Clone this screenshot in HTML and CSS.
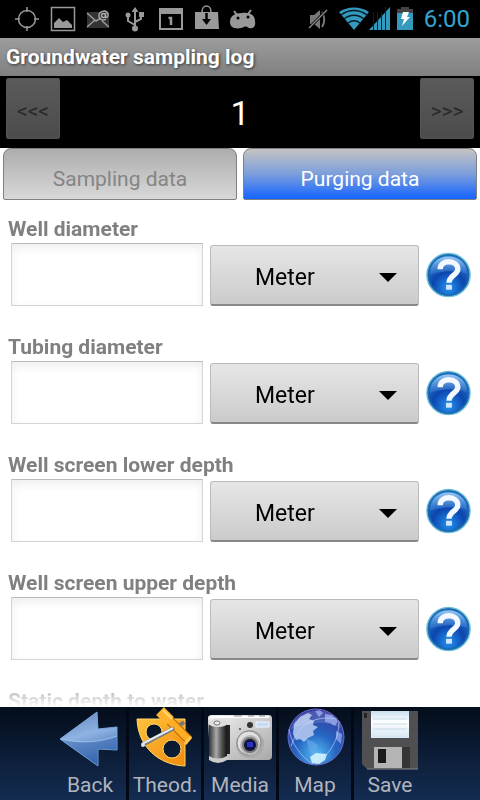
FILE: index.html
```html
<!DOCTYPE html>
<html lang="en">
<head>
  <meta charset="UTF-8" />
  <meta name="viewport" content="width=device-width, initial-scale=1.0" />
  <title>Groundwater sampling log</title>
  <link rel="stylesheet" href="styles.css">
</head>
<body>
<svg class="defs" aria-hidden="true">
  <defs>
    <radialGradient id="helpFill" cx="50%" cy="80%" r="75%">
      <stop offset="0" stop-color="#2392ee" />
      <stop offset="0.5" stop-color="#0c45ae" />
      <stop offset="1" stop-color="#2f80d0" />
    </radialGradient>
    <linearGradient id="helpShine" x2="0" y2="1">
      <stop offset="0" stop-color="#b4dcff" stop-opacity="0.8" />
      <stop offset="1" stop-color="#4b93e4" stop-opacity="0.25" />
    </linearGradient>
    <symbol id="help" viewBox="0 0 46 46">
      <circle cx="23" cy="23" r="22" fill="url(#helpFill)" stroke="#6bbadb" stroke-width="1.500" />
      <circle cx="23" cy="23" r="20.500" fill="none" stroke="#1a6aac" stroke-width="1.500" />
      <path d="M4 23C4 11 12 4 23 4s19 7 19 18c-10-4-25-4-38 1z" fill="url(#helpShine)" />
      <path d="M14.500 17c0-5 4-7.500 9-7.500s9 3 9 7.500c0 6-9 6.500-9 14" fill="none" stroke="#f4f8ff" stroke-width="5.500" />
      <path d="M20.500 33h6v5h-6z" fill="#d4e6ff" />
    </symbol>
  </defs>
</svg>

<div class="status-bar">
  <div class="notifications">
    <svg viewBox="0 0 36 38"><g fill="none" stroke="#999" stroke-width="1.500"><circle cx="18" cy="19" r="8.500" /><path d="M18 7v5M18 26v5M6 19h5M25 19h5" /></g></svg>
    <svg viewBox="0 0 36 38"><path d="M6.500 7.500h23v23h-23z" fill="none" stroke="#999" stroke-width="1.500" /><path d="M9 28v-5l5-5 4 4 4-2 5 5v3z" fill="#999" /></svg>
    <svg viewBox="0 0 36 38"><path d="M6 12h22v16H6z" fill="#333" /><path d="M6 13l9 8 5-3M6 27l8-7M28 27l-7-6" fill="none" stroke="#999" stroke-width="1.500" /><g fill="none" stroke="#aaa" stroke-width="1.400"><circle cx="22.500" cy="15.500" r="2" /><path d="M24.500 13v4c2 1 3-1 2.500-3-2-5-10-3-9 3 1 3 4 4 7 2" /></g></svg>
    <svg viewBox="0 0 36 38"><path d="M18 28V10M18 25l-7-4v-5M18 22l6-3v-4" fill="none" stroke="#999" stroke-width="2" /><path d="M14.500 12L18 7l3.500 5zM22 12h5v5h-5z" fill="#999" /><circle cx="11" cy="15" r="2.500" fill="#999" /><circle cx="18" cy="28.500" r="3" fill="#999" /></svg>
    <svg viewBox="0 0 36 38"><path d="M7 9h22v20H7z" fill="none" stroke="#999" stroke-width="2" /><path d="M6 8h24v6H6z" fill="#999" /><path d="M15.500 18h2.500v7" fill="none" stroke="#999" stroke-width="2.500" /></svg>
    <svg viewBox="0 0 36 38"><path d="M6 12h23l1 17H6z" fill="#999" /><path d="M13 12c0-8 9-8 9 0" fill="none" stroke="#999" stroke-width="1.500" /><path d="M17.500 13v8" stroke="#000" stroke-width="2.500" /><path d="M13 19h9l-4.500 6z" /></svg>
    <svg viewBox="0 0 36 38"><path d="M9 11l3 4M26 10l-3 4" stroke="#999" stroke-width="2" /><path d="M5 22c0-6 5-9 12-9 8-1 13 2 13 8 1 6-2 8-6 7-2-1-3-2-5-1-4 2-14 3-14-5z" fill="#999" /><circle cx="13" cy="18" r="1.500" /><circle cx="23" cy="17" r="1.500" /></svg>
  </div>
  <div class="system">
    <svg class="mute" viewBox="0 0 20 38"><path d="M2 15h4l6-5v19l-6-5H2z" fill="#777" /><path d="M14 12c3 4 3 11 0 15" fill="none" stroke="#777" stroke-width="2" /><path d="M1 28L19 10" stroke="#000" stroke-width="3" /><path d="M1 28L19 10" stroke="#888" stroke-width="1.500" /></svg>
    <svg class="wifi" viewBox="0 0 30 38"><path d="M15 30L0 12C8 6 22 6 30 12z" fill="#3399bd" /><path d="M2 15c8-6 18-6 26 0M5 19c6-5 14-5 20 0M9 23c4-3 8-3 12 0" fill="none" stroke="#051c25" stroke-width="1.500" /></svg>
    <svg class="signal" viewBox="0 0 22 38"><path d="M0 30L21 7v23z" fill="#3399bd" /><path d="M4.500 30V12M8.500 30V12M12.500 30V12M16.500 30V7" stroke="#06202b" /></svg>
    <svg class="battery" viewBox="0 0 16 38"><path d="M4 7h8v3H4zM0 9h16v5H0z" fill="#444" /><path d="M0 13h16v17H0z" fill="#3399bd" /><path d="M6 12h6l-2 5h3l-8 9 2-7H4z" fill="#fff" /></svg>
    <span class="clock">6:00</span>
  </div>
</div>

<header>
  <h1>Groundwater sampling log</h1>
</header>

<div class="pager">
  <button type="button" disabled>&lt;&lt;&lt;</button>
  <span class="page">1</span>
  <button type="button" disabled>&gt;&gt;&gt;</button>
</div>

<nav class="tabs">
  <button type="button">Sampling data</button>
  <button type="button" class="active">Purging data</button>
</nav>

<main>
  <div class="field">
    <label for="wellDiameter">Well diameter</label>
    <div class="row">
      <input type="text" id="wellDiameter">
      <div class="unit"><select aria-label="Well diameter unit"><option>Meter</option></select></div>
      <button type="button" class="help" aria-label="Help"><svg><use href="#help" /></svg></button>
    </div>
  </div>
  <div class="field">
    <label for="tubingDiameter">Tubing diameter</label>
    <div class="row">
      <input type="text" id="tubingDiameter">
      <div class="unit"><select aria-label="Tubing diameter unit"><option>Meter</option></select></div>
      <button type="button" class="help" aria-label="Help"><svg><use href="#help" /></svg></button>
    </div>
  </div>
  <div class="field">
    <label for="lowerDepth">Well screen lower depth</label>
    <div class="row">
      <input type="text" id="lowerDepth">
      <div class="unit"><select aria-label="Well screen lower depth unit"><option>Meter</option></select></div>
      <button type="button" class="help" aria-label="Help"><svg><use href="#help" /></svg></button>
    </div>
  </div>
  <div class="field">
    <label for="upperDepth">Well screen upper depth</label>
    <div class="row">
      <input type="text" id="upperDepth">
      <div class="unit"><select aria-label="Well screen upper depth unit"><option>Meter</option></select></div>
      <button type="button" class="help" aria-label="Help"><svg><use href="#help" /></svg></button>
    </div>
  </div>
  <div class="field">
    <label for="staticDepth">Static depth to water</label>
    <div class="row">
      <input type="text" id="staticDepth">
      <div class="unit"><select aria-label="Static depth to water unit"><option>Meter</option></select></div>
      <button type="button" class="help" aria-label="Help"><svg><use href="#help" /></svg></button>
    </div>
  </div>
</main>

<footer>
  <div class="toolbar">
    <button type="button">
      <svg viewBox="0 0 72 64">
        <defs><linearGradient id="arrow" x2="0.300" y2="1"><stop offset="0" stop-color="#5d83ba" /><stop offset="0.500" stop-color="#8fb3e2" /><stop offset="1" stop-color="#3f6db2" /></linearGradient></defs>
        <path d="M6 32L43 5l1 17 19-2v23l-19-1v17z" fill="url(#arrow)" stroke="#78a5dc" />
        <path d="M7 32c20 5 40 3 56-3v14l-19-1v17z" fill="#3264b0" opacity="0.450" />
        <path d="M7 32c20 5 40 3 56-3" fill="none" stroke="#a9caf0" opacity="0.800" />
      </svg>
      Back
    </button>
    <button type="button">
      <svg viewBox="0 0 72 64">
        <defs><linearGradient id="gold" x2="1" y2="1"><stop offset="0" stop-color="#ffc23c" /><stop offset="1" stop-color="#f08a0c" /></linearGradient></defs>
        <path d="M8 12h48v47C30 58 9 40 8 12zM25 17a8 8 0 1 0 0 16 8 8 0 1 0 0-16zM43 33a9 9 0 1 0 0 18 9 9 0 1 0 0-18z" fill="url(#gold)" fill-rule="evenodd" stroke="#ffd668" />
        <path d="M34 7l26 26" stroke="#b86a08" stroke-width="9" />
        <path d="M34 7l26 26" stroke="#ffad22" stroke-width="7" />
        <path d="M31 4l10 10" stroke="#ffb22c" stroke-width="11" />
        <path d="M34 3l9 9" stroke="#ffda72" stroke-width="2" />
        <path d="M56 37l6-7" stroke="#ffc650" stroke-width="3" />
        <path d="M13 38l32-17" stroke="#70767c" stroke-width="4" />
        <path d="M13 37l31-16" stroke="#e6eaee" stroke-width="2" />
        <path d="M51 18l4-3" stroke="#777" stroke-width="4" />
        <circle cx="14" cy="38" r="2" fill="#dde2e6" />
      </svg>
      Theod.
    </button>
    <button type="button">
      <svg viewBox="0 0 72 64">
        <defs>
          <linearGradient id="silver" x2="1" y2="1"><stop offset="0" stop-color="#f2f2f2" /><stop offset="1" stop-color="#a8a8a8" /></linearGradient>
          <linearGradient id="grip" x2="1" y2="0"><stop offset="0" stop-color="#333" /><stop offset="0.400" stop-color="#aaa" /><stop offset="0.700" stop-color="#555" /><stop offset="1" stop-color="#151515" /></linearGradient>
        </defs>
        <path d="M4 11q0-3 4-3h57q3 0 3 4v37q0 4-4 4H20L6 51z" fill="url(#silver)" />
        <path d="M7 10h58" stroke="#fff" stroke-width="2" />
        <path d="M30 9h8M44 9h6M55 9h6" stroke="#888" />
        <path d="M21 18h5v29h-5z" fill="#222" />
        <path d="M5 17h18v35q-9 6-18 0z" fill="url(#grip)" />
        <path d="M5 49q9 5 18 0v4q-9 6-18 0z" fill="#ccc" />
        <ellipse cx="14" cy="16" rx="10" ry="4" fill="#ddd" />
        <ellipse cx="13" cy="16" rx="3" ry="2" fill="#eee" stroke="#777" />
        <circle cx="46" cy="18" r="3" fill="#333" />
        <circle cx="36" cy="22" r="1" fill="#444" />
        <path d="M52 15h13v5H52z" fill="#c7dcf4" stroke="#eef5ff" />
        <circle cx="46" cy="37" r="14" fill="#aaa" />
        <circle cx="45" cy="36" r="12" fill="#e1e1e1" stroke="#888" />
        <circle cx="46" cy="38" r="9" fill="#777" stroke="#bbb" stroke-width="2" />
        <circle cx="46" cy="38" r="6" fill="#11113c" />
        <path d="M43 35h6v5h-6z" fill="#2832c8" />
      </svg>
      Media
    </button>
    <button type="button">
      <svg viewBox="0 0 72 64">
        <defs><radialGradient id="globe" cx="50%" cy="80%" r="80%"><stop offset="0" stop-color="#55bcf4" /><stop offset="0.450" stop-color="#2566c2" /><stop offset="1" stop-color="#39369c" /></radialGradient></defs>
        <circle cx="37" cy="30" r="28" fill="url(#globe)" stroke="#6a6bc8" />
        <path d="M15 17l6-7 8-4 4 2-3 4 5 2-1 4 5 2-5 4 1 4-6 3-4 4-4-3-4 1-3-6z" fill="#b9cdf2" opacity="0.850" />
        <path d="M36 4l5-1 3 3-4 4zM46 7l7 1 6 6-3 5-5-3-5-1zM57 24l6 3-1 10-5-5z" fill="#8faaf0" opacity="0.750" />
        <path d="M27 32l6 2 6 4-3 6 1 9-5-6-3-8z" fill="#6aa8ec" opacity="0.600" />
        <path d="M31 50l6-4 11 1-2 6-6 4-7-1z" fill="#d5f3ff" opacity="0.900" />
        <path d="M10 22c2 14 12 28 24 35M60 14C60 34 50 48 36 57M12 39C20 16 38 8 58 12" fill="none" stroke="#bfdcff" opacity="0.600" />
        <path d="M12 22C16 7 32 1 47 5c9 3 14 10 15 16-18-8-33-6-50 1z" fill="#fff" opacity="0.130" />
      </svg>
      Map
    </button>
    <button type="button">
      <svg viewBox="0 0 72 64">
        <defs><linearGradient id="paper" x2="0" y2="1"><stop offset="0" stop-color="#c8e0f0" /><stop offset="0.400" stop-color="#fff" /><stop offset="1" stop-color="#d5e6f2" /></linearGradient></defs>
        <path d="M8 4h56v58H13l-5-5z" fill="#505052" />
        <path d="M10 6h3v5h-3z" fill="#222" />
        <path d="M17 4h38v27H17z" fill="url(#paper)" />
        <path d="M19 12h34M19 17h34M19 22h34" stroke="#c9dbe7" />
        <path d="M20 40h36v21H20z" fill="#353536" />
        <path d="M20 40h28v21H20z" fill="#b4b4b4" />
        <path d="M24 42h8v14h-8z" fill="#1b1b1b" />
        <path d="M13 62h51" stroke="#888" />
      </svg>
      Save
    </button>
  </div>
</footer>
</body>
</html>
```
FILE: styles.css
```css
* {
  box-sizing: border-box;
}
body {
  font-family: Roboto, sans-serif;
  margin: 0;
  height: 100vh;
  display: flex;
  flex-direction: column;
  background-color: #fff;
  color: #808080;
}
button, input, select {
  font-family: inherit;
  margin: 0;
}
svg {
  display: block;
}
.defs {
  position: absolute;
  width: 0;
  height: 0;
}

.status-bar {
  flex: none;
  height: 38px;
  padding: 0 10px 0 9px;
  display: flex;
  justify-content: space-between;
  background-color: #000;
}
.notifications, .system {
  display: flex;
  align-items: center;
}
.notifications svg {
  width: 36px;
  height: 38px;
}
.system svg {
  height: 38px;
}
.mute {
  width: 20px;
  margin-right: 11px;
}
.wifi {
  width: 30px;
}
.signal {
  width: 22px;
  margin-right: 6px;
}
.battery {
  width: 16px;
  margin-right: 11px;
}
.clock {
  font-size: 24px;
  line-height: 38px;
  color: #33a5cf;
}

header {
  flex: none;
  padding: 0 6px;
  background: linear-gradient(#9c9c9c, #808080);
}
h1 {
  margin: 0;
  font-size: 21px;
  line-height: 38px;
  font-weight: 700;
  color: #fff;
  text-shadow: 1px 1px 3px #333;
}

.pager {
  flex: none;
  height: 72px;
  padding: 2px 6px 0;
  display: flex;
  justify-content: space-between;
  align-items: flex-start;
  background-color: #000;
}
.pager button {
  width: 54px;
  height: 61px;
  padding: 4px 0 0;
  border: 1px solid #555;
  border-radius: 2px;
  background: linear-gradient(#5a5a5a, #4c4c4c);
  color: #292929;
  font-size: 21px;
}
.page {
  font-size: 34px;
  line-height: 70px;
  color: #fff;
}

.tabs {
  flex: none;
  display: flex;
  gap: 6px;
  padding: 0 3px;
}
.tabs button {
  flex: 1;
  height: 52px;
  padding: 10px 0 0;
  border: 1px solid #808080;
  border-radius: 8px 8px 2px 2px;
  background: linear-gradient(#adadad, #d8d8d8);
  color: #858585;
  font-size: 21px;
}
.tabs .active {
  background: linear-gradient(#c4c4c4, #7c9edc 50%, #1464ff);
  color: #fff;
}

/* the list scrolls under the toolbar and fades out at its lower edge */
main {
  flex: 1;
  min-height: 0;
  overflow-y: auto;
  scrollbar-width: none;
  padding-top: 16px;
  -webkit-mask-image: linear-gradient(to top, transparent, #000 30px);
  mask-image: linear-gradient(to top, transparent, #000 30px);
}
.field {
  padding: 0 8px;
  margin-bottom: 28px;
}
.field label {
  display: block;
  font-size: 21px;
  line-height: 26px;
  font-weight: 700;
}
.row {
  display: flex;
  align-items: center;
  gap: 7px;
  padding: 1px 1px 0 3px;
}
.row input {
  flex: 1;
  min-width: 0;
  height: 63px;
  padding: 0 12px;
  border: 1px solid #d4d4d4;
  border-top-color: #bbb;
  background-color: #fff;
  box-shadow: inset 0 4px 10px #eee;
  font-size: 21px;
}
.unit {
  position: relative;
  align-self: flex-end;
  width: 209px;
}
.unit::after {
  content: "";
  position: absolute;
  right: 22px;
  top: 28px;
  border: 9px solid transparent;
  border-top-color: #000;
  border-bottom: none;
  pointer-events: none;
}
.unit select {
  display: block;
  width: 100%;
  height: 61px;
  padding: 4px 60px 0 44px;
  appearance: none;
  border: 1px solid #bbb;
  border-bottom: 2px solid #888;
  border-radius: 3px;
  background: linear-gradient(#e6e6e6, #cbcbcb);
  color: #000;
  font-size: 23px;
}
.help {
  padding: 0;
  border: none;
  background: none;
}
.help svg {
  width: 45px;
  height: 46px;
}

footer {
  flex: none;
  background: linear-gradient(#040d1b, #142c52);
}
.toolbar {
  display: flex;
  justify-content: center;
}
.toolbar button {
  height: 93px;
  padding: 0;
  border: none;
  background: none;
  color: #b0b4bd;
  font-size: 21px;
  line-height: 29px;
}
.toolbar button + button {
  border-left: 3px solid #030914;
}
.toolbar svg {
  width: 72px;
  height: 64px;
}
```
